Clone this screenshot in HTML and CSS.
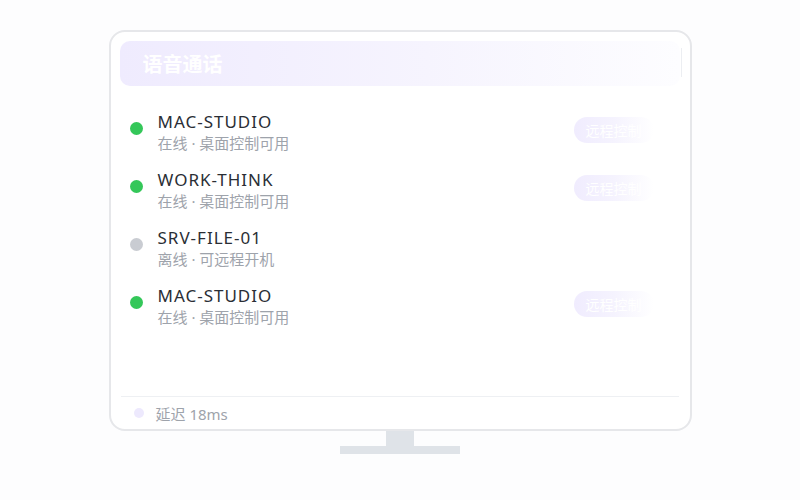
FILE: index.html
```html
<!DOCTYPE html>
<html lang="zh-CN">

<head>
    <meta charset="UTF-8">
    <meta name="viewport" content="width=device-width, initial-scale=1.0">
    <title>语音通话</title>
    <link rel="stylesheet" href="styles.css">
</head>

<body>
    <div class="scene">
        <div class="monitor">
            <div class="call_header">
                <h2>语音通话</h2>
                <span class="header_edge"></span>
            </div>

            <ul class="device_list">
                <li class="device">
                    <span class="status_dot online"></span>
                    <div class="device_info">
                        <div class="device_name">MAC-STUDIO</div>
                        <div class="device_state">在线 · 桌面控制可用</div>
                    </div>
                    <button class="remote_btn">远程控制</button>
                </li>
                <li class="device">
                    <span class="status_dot online"></span>
                    <div class="device_info">
                        <div class="device_name">WORK-THINK</div>
                        <div class="device_state">在线 · 桌面控制可用</div>
                    </div>
                    <button class="remote_btn">远程控制</button>
                </li>
                <li class="device">
                    <span class="status_dot offline"></span>
                    <div class="device_info">
                        <div class="device_name">SRV-FILE-01</div>
                        <div class="device_state">离线 · 可远程开机</div>
                    </div>
                </li>
                <li class="device">
                    <span class="status_dot online"></span>
                    <div class="device_info">
                        <div class="device_name">MAC-STUDIO</div>
                        <div class="device_state">在线 · 桌面控制可用</div>
                    </div>
                    <button class="remote_btn">远程控制</button>
                </li>
            </ul>

            <div class="call_footer">
                <span class="latency_dot"></span>
                <span class="latency">延迟 18ms</span>
            </div>
        </div>
        <div class="stand_neck"></div>
        <div class="stand_base"></div>
    </div>
</body>

</html>
```

FILE: styles.css
```css
body {
    font-family: "Noto Sans", "Noto Sans CJK SC", sans-serif;
    background-color: #fdfdfe;
    margin: 0;
    padding: 0;
}

.scene {
    display: flex;
    flex-direction: column;
    align-items: center;
    padding-top: 30px;
}

.monitor {
    width: 583px;
    height: 401px;
    box-sizing: border-box;
    border: 2px solid #e6e7ea;
    border-radius: 16px;
    background-color: #fff;
    padding: 9px 10px 0 9px;
    display: flex;
    flex-direction: column;
}

.call_header {
    height: 45px;
    border-radius: 10px;
    background: linear-gradient(90deg, #efebfe 0%, #f6f4fe 55%, #fdfdff 100%);
    display: flex;
    align-items: center;
    padding-left: 23px;
    position: relative;
}

.call_header h2 {
    margin: 0;
    font-size: 20px;
    font-weight: bold;
    color: #fff;
    font-family: "Noto Sans CJK SC", sans-serif;
}

.header_edge {
    position: absolute;
    right: -2px;
    top: 7px;
    width: 1px;
    height: 29px;
    background-color: #eceef2;
}

.device_list {
    list-style-type: none;
    margin: 25px 0 0;
    padding: 0;
    flex: 1;
}

.device {
    height: 58px;
    display: flex;
    align-items: flex-start;
    padding-left: 10px;
}

.status_dot {
    width: 13px;
    height: 13px;
    border-radius: 50%;
    margin-top: 11px;
    margin-right: 15px;
    flex-shrink: 0;
}

.status_dot.online {
    background-color: #34c759;
}

.status_dot.offline {
    background-color: #c9ccd2;
}

.device_info {
    flex: 1;
}

.device_name {
    font-size: 17px;
    line-height: 22px;
    letter-spacing: 1px;
    color: #2a2e35;
}

.device_state {
    font-size: 15px;
    line-height: 20px;
    color: #9ea3ab;
}

.remote_btn {
    width: 80px;
    height: 26px;
    margin-top: 6px;
    margin-right: 26px;
    border: none;
    border-radius: 13px;
    padding: 0 0 0 12px;
    text-align: left;
    background: linear-gradient(90deg, #f0ecfe 0%, #f5f3fe 50%, rgba(255, 255, 255, 0) 100%);
    color: #fff;
    font-size: 14px;
    font-family: "Noto Sans CJK SC", sans-serif;
}

.call_footer {
    height: 32px;
    border-top: 1px solid #eef0f3;
    margin: 0 1px 0 1px;
    display: flex;
    align-items: center;
    padding-left: 13px;
}

.latency_dot {
    width: 10px;
    height: 10px;
    border-radius: 50%;
    background-color: #ede9fd;
    margin-right: 12px;
}

.latency {
    font-size: 15px;
    color: #9ea3ab;
}

.stand_neck {
    width: 28px;
    height: 15px;
    background-color: #dfe3e8;
}

.stand_base {
    width: 120px;
    height: 8px;
    background-color: #dfe3e8;
}
```
